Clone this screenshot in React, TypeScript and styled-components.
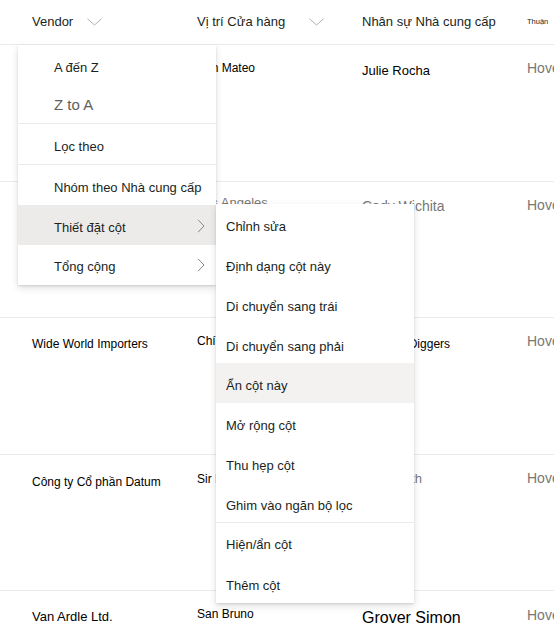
import React from "react";
import styled, { createGlobalStyle } from "styled-components";

const GlobalStyle = createGlobalStyle`
  html, body {
    margin: 0;
    padding: 0;
    background: #ffffff;
    overflow: hidden;
  }
  body {
    font-family: "Liberation Sans", Arial, sans-serif;
    color: #201f1e;
  }
`;

const Page = styled.div`
  position: relative;
  width: 554px;
  height: 631px;
  overflow: hidden;
  background: #ffffff;
`;

const columns = "32px 165px 165px 165px 1fr";

const HeaderRow = styled.div`
  display: grid;
  grid-template-columns: ${columns};
  height: 45px;
  box-sizing: border-box;
  border-bottom: 1px solid #edebe9;
  align-items: center;
`;

const HeaderCell = styled.div<{ $size?: number }>`
  display: flex;
  align-items: center;
  font-size: ${({ $size }) => $size ?? 13}px;
  color: #201f1e;
  white-space: nowrap;
  padding-bottom: 1px;
`;

const HeaderChevron = styled.svg<{ $gap: number }>`
  width: 15px;
  height: 8px;
  margin-left: ${({ $gap }) => $gap}px;
  margin-top: 1px;
`;

const Row = styled.div`
  display: grid;
  grid-template-columns: ${columns};
  height: 136.5px;
  box-sizing: border-box;
  border-bottom: 1px solid #edebe9;
`;

const Cell = styled.div<{ $size: number; $top: number; $muted?: boolean }>`
  padding-top: ${({ $top }) => $top}px;
  font-size: ${({ $size }) => $size}px;
  line-height: 16px;
  color: ${({ $muted }) => ($muted ? "#797775" : "#000000")};
  white-space: nowrap;
`;

const Menu = styled.div<{ $left: number; $top: number; $pad: number }>`
  position: absolute;
  left: ${({ $left }) => $left}px;
  top: ${({ $top }) => $top}px;
  width: 198px;
  padding-top: ${({ $pad }) => $pad}px;
  background: #ffffff;
  box-shadow: 0 3.2px 7.2px rgba(0, 0, 0, 0.13), 0 0.6px 1.8px rgba(0, 0, 0, 0.11);
  z-index: 2;
`;

const MenuItem = styled.div<{ $h: number; $indent: number; $lift?: number; $hover?: string; $muted?: boolean }>`
  display: flex;
  align-items: center;
  justify-content: space-between;
  height: ${({ $h }) => $h}px;
  padding: ${({ $lift }) => $lift ?? 3}px 11px 0 ${({ $indent }) => $indent}px;
  box-sizing: border-box;
  font-size: ${({ $muted }) => ($muted ? 15 : 13)}px;
  color: ${({ $muted }) => ($muted ? "#605e5c" : "#201f1e")};
  background: ${({ $hover }) => $hover ?? "transparent"};
  white-space: nowrap;
`;

const Divider = styled.div`
  height: 1px;
  background: #edebe9;
`;

const SubChevron = styled.svg`
  width: 8px;
  height: 14px;
  margin-top: -3px;
`;

const ChevronDown = ({ gap }: { gap: number }) => (
  <HeaderChevron $gap={gap} viewBox="0 0 15 8">
    <path d="M0.5 0.8 L7.5 7 L14.5 0.8" fill="none" stroke="#b3b0ad" strokeWidth="1" />
  </HeaderChevron>
);

const ChevronRight = () => (
  <SubChevron viewBox="0 0 8 14">
    <path d="M1 0.8 L7 7 L1 13.2" fill="none" stroke="#8a8886" strokeWidth="1" />
  </SubChevron>
);

type CellData = { text: string; size: number; top: number; muted?: boolean };

const rows: CellData[][] = [
  [
    { text: "Fabrikam", size: 12, top: 18 },
    { text: "San Mateo", size: 12, top: 15 },
    { text: "Julie Rocha", size: 13, top: 18 },
    { text: "Hovet Lake", size: 14, top: 15, muted: true },
  ],
  [
    { text: "Fourth Coffee", size: 12, top: 18, muted: true },
    { text: "Los Angeles", size: 13, top: 13, muted: true },
    { text: "Cody Wichita", size: 14, top: 16, muted: true },
    { text: "Hovet Lake", size: 14, top: 15, muted: true },
  ],
  [
    { text: "Wide World Importers", size: 12, top: 18 },
    { text: "Chí Minh", size: 12, top: 15 },
    { text: "Lucerne  Diggers", size: 12, top: 18 },
    { text: "Hovet Lake", size: 14, top: 15, muted: true },
  ],
  [
    { text: "Công ty Cổ phần Datum", size: 12, top: 19 },
    { text: "Sir Edmund", size: 12, top: 16 },
    { text: "Ben Smith", size: 13, top: 16, muted: true },
    { text: "Hovet Lake", size: 14, top: 15, muted: true },
  ],
  [
    { text: "Van Ardle Ltd.", size: 13, top: 18 },
    { text: "San  Bruno", size: 12, top: 15 },
    { text: "Grover Simon", size: 16, top: 19 },
    { text: "Hovet Lake", size: 14, top: 16, muted: true },
  ],
];

const settingsItems = [
  "Chỉnh sửa",
  "Định dạng cột này",
  "Di chuyển sang trái",
  "Di chuyển sang phải",
  "Ẩn cột này",
  "Mở rộng cột",
  "Thu hẹp cột",
  "Ghim vào ngăn bộ lọc",
];

export default function App() {
  return (
    <Page>
      <GlobalStyle />
      <HeaderRow>
        <span />
        <HeaderCell>
          Vendor
          <ChevronDown gap={14} />
        </HeaderCell>
        <HeaderCell>
          Vị trí Cửa hàng
          <ChevronDown gap={24} />
        </HeaderCell>
        <HeaderCell>Nhân sự Nhà cung cấp</HeaderCell>
        <HeaderCell $size={7.5}>Thuận</HeaderCell>
      </HeaderRow>

      {rows.map((row, i) => (
        <Row key={i}>
          <span />
          {row.map((cell, j) => (
            <Cell key={j} $size={cell.size} $top={cell.top} $muted={cell.muted}>
              {cell.text}
            </Cell>
          ))}
        </Row>
      ))}

      <Menu $left={18} $top={45} $pad={4}>
        <MenuItem $h={37} $indent={36} $lift={0}>A đến Z</MenuItem>
        <MenuItem $h={37} $indent={36} $lift={0} $muted>Z to A</MenuItem>
        <Divider />
        <MenuItem $h={40} $indent={36} $lift={4}>Lọc theo</MenuItem>
        <Divider />
        <MenuItem $h={40} $indent={36} $lift={4}>Nhóm theo Nhà cung cấp</MenuItem>
        <MenuItem $h={40} $indent={36} $lift={4} $hover="#edebe9">
          Thiết đặt cột
          <ChevronRight />
        </MenuItem>
        <MenuItem $h={40} $indent={36} $lift={2}>
          Tổng cộng
          <ChevronRight />
        </MenuItem>
      </Menu>

      <Menu $left={216} $top={204} $pad={0}>
        {settingsItems.map((label) => (
          <MenuItem
            key={label}
            $h={39.75}
            $indent={10}
            $lift={6}
            $hover={label === "Ẩn cột này" ? "#f3f2f1" : undefined}
          >
            {label}
          </MenuItem>
        ))}
        <Divider />
        <MenuItem $h={39.75} $indent={10} $lift={3}>Hiện/ẩn cột</MenuItem>
        <MenuItem $h={39.75} $indent={10} $lift={6}>Thêm cột</MenuItem>
      </Menu>
    </Page>
  );
}
